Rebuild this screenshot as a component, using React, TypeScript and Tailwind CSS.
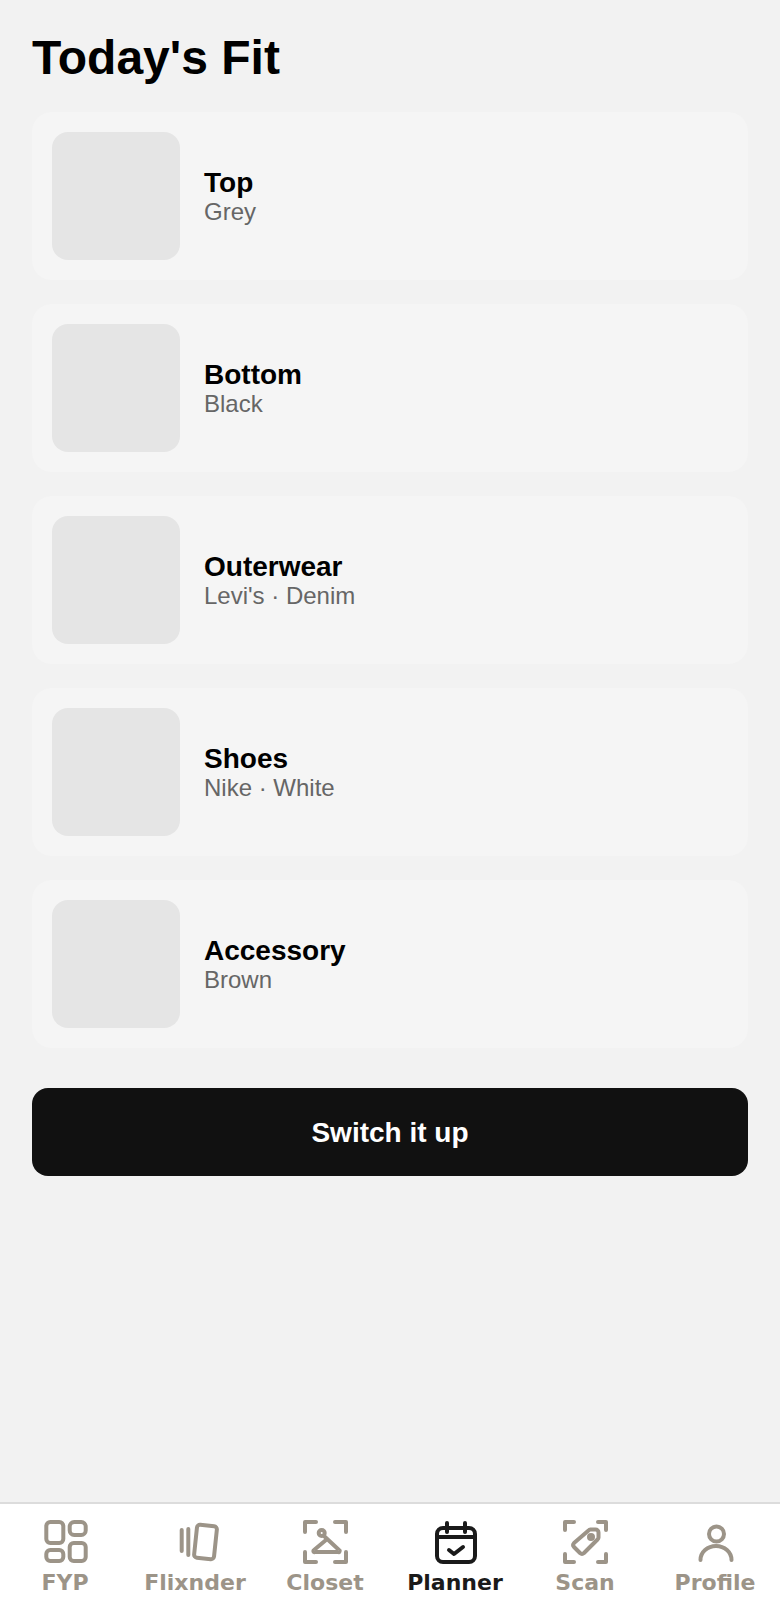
import type { ReactNode } from "react";

const items = [
  { title: "Top", sub: "Grey" },
  { title: "Bottom", sub: "Black" },
  { title: "Outerwear", sub: "Levi's · Denim" },
  { title: "Shoes", sub: "Nike · White" },
  { title: "Accessory", sub: "Brown" },
];

function Icon({ children }: { children: ReactNode }) {
  return (
    <svg width="48" height="48" viewBox="0 0 48 48" fill="none" stroke="currentColor" strokeWidth="4" strokeLinecap="round" strokeLinejoin="round">
      {children}
    </svg>
  );
}

const tabs: { label: string; active?: boolean; icon: ReactNode }[] = [
  {
    label: "FYP",
    icon: (
      <>
        <rect x="5.3" y="4" width="17" height="21" rx="4" />
        <rect x="28.7" y="4" width="16" height="13" rx="4.5" />
        <rect x="5.3" y="32" width="17" height="11" rx="4" />
        <rect x="28.7" y="25" width="16" height="18" rx="4" />
      </>
    ),
  },
  {
    label: "Flixnder",
    icon: (
      <>
        <path d="M10.7 12v21" />
        <path d="M17.3 11v26" />
        <rect x="24.5" y="7.5" width="20" height="33" rx="3" transform="rotate(6 34.5 24)" />
      </>
    ),
  },
  {
    label: "Closet",
    icon: (
      <>
        <path d="M4 14V4h11M34 4h11v10M45 34v10H34M15 44H4V34" />
        <circle cx="20.7" cy="15" r="3" />
        <path d="M23 18l15 14a1 1 0 0 1-1 2H14a1 1 0 0 1-1-2l12-10" />
      </>
    ),
  },
  {
    label: "Planner",
    active: true,
    icon: (
      <>
        <rect x="6" y="10" width="38" height="34" rx="6" />
        <path d="M6 19h38M16 5v9M34 5v9" />
        <path d="M18 32l5 4 9-7" />
      </>
    ),
  },
  {
    label: "Scan",
    icon: (
      <>
        <path d="M4 12V4h9M37 4h8v8M45 36v8h-8M13 44H4v-8" />
        <path d="M27.5 12.5a3 3 0 0 1 2-1h5a3 3 0 0 1 3 3v5a3 3 0 0 1-1 2L23 35a3 3 0 0 1-4 0l-6-6a3 3 0 0 1 0-4z" />
        <circle cx="30" cy="19" r="2" fill="currentColor" />
      </>
    ),
  },
  {
    label: "Profile",
    icon: (
      <>
        <circle cx="25.5" cy="16" r="7.5" />
        <path d="M9.5 42a15.5 14 0 0 1 31 0" />
      </>
    ),
  },
];

export default function App() {
  return (
    <div className="flex h-[1600px] w-[780px] flex-col bg-[#f2f2f2] font-['Liberation_Sans',sans-serif]">
      <main className="flex-1 px-8 pt-8">
        <h1 className="mb-7 text-[48px] leading-[52px] font-bold text-black">Today's Fit</h1>
        <div className="flex flex-col gap-6">
          {items.map((item) => (
            <div key={item.title} className="flex items-center gap-6 rounded-[20px] bg-[#f5f5f5] p-5">
              <div className="h-32 w-32 rounded-2xl bg-[#e5e5e5]" />
              <div className="pt-[2px]">
                <div className="text-[28px] leading-[30px] font-bold text-black">{item.title}</div>
                <div className="text-[24px] leading-[28px] text-[#666666]">{item.sub}</div>
              </div>
            </div>
          ))}
        </div>
        <button className="mt-10 h-[88px] w-full rounded-2xl bg-[#111111] pt-[2px] text-[28px] font-bold text-white">
          Switch it up
        </button>
      </main>
      <nav className="grid h-[98px] grid-cols-6 border-t-2 border-[#dcdcdc] bg-white font-['DejaVu_Sans',sans-serif]">
        {tabs.map((tab) => (
          <div key={tab.label} className={`flex flex-col items-center pt-3.5 ${tab.active ? "text-[#1a1a1a]" : "text-[#9c9488]"}`}>
            <Icon>{tab.icon}</Icon>
            <span className="mt-1 text-[22px] leading-[26px] font-bold">{tab.label}</span>
          </div>
        ))}
      </nav>
    </div>
  );
}
